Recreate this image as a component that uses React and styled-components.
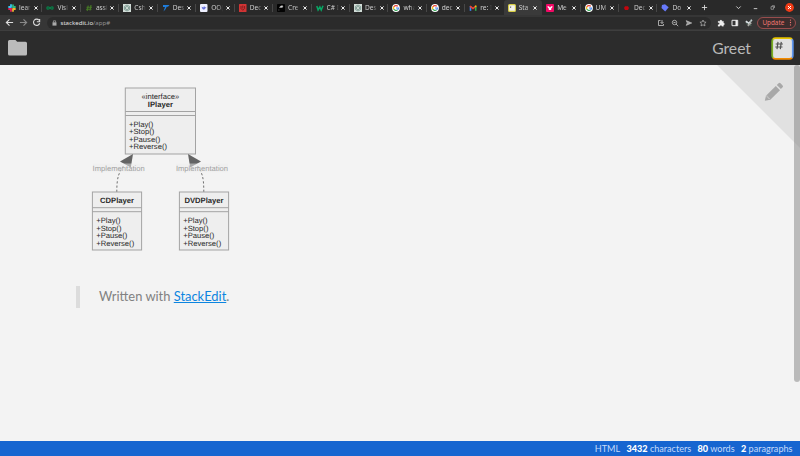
import React from "react";
import styled, { createGlobalStyle } from "styled-components";

const Global = createGlobalStyle`
  * { box-sizing: border-box; }
  html, body { margin: 0; overflow: hidden; }
  svg { display: block; flex: none; }
`;

const Screen = styled.div`
  display: flex;
  flex-direction: column;
  width: 800px;
  height: 456px;
  background: #f3f3f3;
  font-family: Lato, sans-serif;
`;

const TabStrip = styled.div`
  display: flex;
  height: 15px;
  flex: none;
  padding-left: 4px;
  background: #292929;
  color: #cecece;
  font-family: "Noto Sans", sans-serif;
`;

const Tab = styled.div`
  display: flex;
  align-items: center;
  flex: none;
  width: 38.45px;
  height: 15px;
  padding-left: 4px;
  border-radius: 3px 3px 0 0;
  background: ${(p) => (p.$active ? "#3a3a3a" : "transparent")};
`;

const TabTitle = styled.span`
  width: 12px;
  margin-left: 3px;
  overflow: hidden;
  white-space: nowrap;
  font-size: 6.6px;
  line-height: 10px;
  mask-image: linear-gradient(90deg, #000 60%, transparent 100%);
`;

const TabClose = styled.span`
  display: flex;
  margin-left: 2.6px;
`;

const Separator = styled.span`
  width: 1px;
  height: 8px;
  margin-left: auto;
  background: ${(p) => (p.$hidden ? "transparent" : "#474747")};
`;

const WindowControls = styled.div`
  display: grid;
  grid-template-columns: 17px 34px 17px 17px 18px;
  align-items: center;
  justify-items: center;
  flex: none;
  svg:nth-child(2) { justify-self: end; margin-right: 5px; }
`;

const Toolbar = styled.div`
  display: flex;
  align-items: center;
  flex: none;
  height: 16px;
  padding: 0 4px 0 5px;
  background: #363636;
  border-bottom: 1px solid #3e3e3e;
  font-family: "Noto Sans", sans-serif;
`;

const NavButtons = styled.div`
  display: flex;
  gap: 4.7px;
  width: 42px;
`;

const Address = styled.div`
  display: flex;
  align-items: center;
  width: 664px;
  height: 12px;
  padding: 0 4px 0 4.5px;
  border-radius: 6px;
  background: #2b2b2b;
`;

const Url = styled.span`
  margin-left: 4px;
  color: #e2e2e2;
  font-size: 6.1px;
  line-height: 10px;
`;

const UrlPath = styled.span`
  color: #929292;
`;

const AddressIcons = styled.div`
  display: flex;
  gap: 6px;
  margin-left: auto;
`;

const Extensions = styled.div`
  display: flex;
  align-items: center;
  gap: 6px;
  margin-left: 5.5px;
`;

const Update = styled.div`
  display: flex;
  align-items: center;
  justify-content: space-between;
  width: 39px;
  height: 12px;
  margin-left: auto;
  padding: 0 3px 0 4.5px;
  border: 1px solid #984d4d;
  border-radius: 6px;
  background: #3b2d2d;
  color: #ee7772;
  font-size: 6.3px;
  line-height: 9px;
`;

const AppBar = styled.header`
  display: flex;
  align-items: center;
  flex: none;
  height: 34px;
  padding: 0 6px 0 8px;
  background: #2c2c2c;
`;

const FileTitle = styled.span`
  margin-left: auto;
  margin-right: 20px;
  color: #b9b9b9;
  font-size: 15.7px;
  line-height: 22px;
`;

const Preview = styled.main`
  position: relative;
  flex: 1;
  padding: 20px 0 0 76px;
`;

const EditCorner = styled.div`
  position: absolute;
  top: 0;
  right: 0;
`;

const ScrollThumb = styled.div`
  position: absolute;
  top: 0;
  right: 0;
  width: 6px;
  height: 317px;
  border-radius: 3px;
  background: rgba(120, 120, 120, 0.46);
`;

const Quote = styled.blockquote`
  width: 500px;
  height: 22px;
  margin: 31px 0 0;
  padding-left: 19px;
  border-left: 4px solid #dcdcdc;
  color: #818181;
  font-size: 12.9px;
  line-height: 20px;
`;

const Link = styled.a`
  color: #0c85e0;
  text-decoration: underline;
  text-decoration-thickness: 1px;
`;

const StatusBar = styled.footer`
  display: flex;
  align-items: center;
  justify-content: flex-end;
  gap: 6.3px;
  flex: none;
  height: 15px;
  padding-right: 7.5px;
  background: #1665d0;
  color: #c5dafa;
  font-size: 9.1px;
  line-height: 14px;
  b { color: #fff; font-weight: 900; }
`;

const Diagram = styled.svg`
  font-family: "Liberation Sans", sans-serif;
  font-size: 7.65px;
  fill: #292929;
  text-rendering: geometricPrecision;
`;

const Lines = styled.g`
  fill: #eee;
  stroke: #a3a3a3;
  stroke-width: 1;
`;

const ClassName = styled.text`
  font-weight: ${(p) => (p.$plain ? 400 : 700)};
  text-anchor: middle;
`;

const Relation = styled.text`
  fill: #a3a3a3;
  text-anchor: middle;
`;

const icons = {
  slack: (
    <g strokeWidth="1.8" strokeLinecap="round" fill="none">
      <path d="M3 1v2M1 3h2" stroke="#36c5f0" />
      <path d="M5 1.2v2M7 3H5" stroke="#2eb67d" />
      <path d="M5 7V5M7 5H5" stroke="#ecb22e" />
      <path d="M1 5h2v2" stroke="#e01e5a" />
    </g>
  ),
  infinity: <path d="M1 4c0-2 2-1 3 0s3 2 3 0-2-1-3 0-3 2-3 0Z" fill="none" stroke="#087c46" strokeWidth="1.4" />,
  hash: <path d="M3.2 1.5 2.2 7M6 1 5 6.5M1.5 3.2h5.5M1 5.2h5.5" stroke="#467a25" strokeWidth="1.1" />,
  gpt: (
    <>
      <rect width="8" height="8" fill="#d2ddd8" />
      <path d="m4 1 2.6 1.5v3L4 7 1.4 5.5v-3ZM4 2.4l1.5.8v1.7L4 5.7l-1.5-.8V3.2Z" fill="none" stroke="#62847a" strokeWidth=".7" />
    </>
  ),
  f: <path d="M1 1h6.5L6 2.8H4.7L3.5 5.3 1.5 7.5 3 3H1Z" fill="#1e7ddc" />,
  doc: (
    <>
      <rect width="7.5" height="8" rx="1" fill="#eef0ff" />
      <path d="m1.5 2.7 2 .8L4 2l1 1.3h1.5L4 5.8 2.5 5Z" fill="#6670dc" />
    </>
  ),
  red: (
    <>
      <rect width="7.5" height="8" rx=".5" fill="#d23434" />
      <path d="M2 2v2.5l1.8 1.8 1.8-1.8V2M3.8 1.5v3" fill="none" stroke="#6c181a" strokeWidth=".8" />
    </>
  ),
  black: (
    <>
      <rect width="8" height="8" rx=".8" fill="#030303" />
      <path d="M2.5 3.5c.5-1.3 2-2 3.5-1.5L5.3 3.5ZM1.2 6h1.3" fill="#d7d7d7" stroke="#bbb" strokeWidth=".4" />
    </>
  ),
  w: <path d="m.8 2 1.3 4 1.8-3 1.3 3 1.8-4.3" fill="none" stroke="#08a764" strokeWidth="1.5" />,
  google: (
    <>
      <circle cx="4" cy="4" r="3.9" fill="#fff" />
      <g fill="none" strokeWidth="1.2">
        <path d="M5.8 2.3A2.5 2.5 0 0 0 1.8 3" stroke="#ea4335" />
        <path d="M1.8 2.8a2.5 2.5 0 0 0 0 2.3" stroke="#fbbc05" />
        <path d="M1.8 5.1a2.5 2.5 0 0 0 3.8.8" stroke="#34a853" />
        <path d="M4 4h2.4a2.5 2.5 0 0 1-.8 1.9" stroke="#4285f4" />
      </g>
    </>
  ),
  gmail: (
    <g fill="none" strokeWidth="1.6">
      <path d="M1.5 6.8V2.2" stroke="#4285f4" />
      <path d="M1 2.2 4 4.5l3-2.3" stroke="#ea4335" />
      <path d="M6.7 6.8V3" stroke="#34a853" />
      <path d="M6.7 3.2V1.5" stroke="#fbbc05" />
    </g>
  ),
  stack: (
    <>
      <rect x=".6" y=".6" width="6.8" height="6.8" rx="1" fill="#f3f3ef" stroke="#d6cc43" strokeWidth="1.1" />
      <path d="M2 3.5h1M2.7 2v2" stroke="#666" strokeWidth=".6" />
    </>
  ),
  mermaid: (
    <>
      <rect width="8" height="8" rx="1" fill="#f30865" />
      <path d="M1.5 2q2 .1 2.5 1.8Q4.5 2.1 6.5 2q.1 1.5-1.3 2.5v1.6H2.8V4.5Q1.4 3.5 1.5 2Z" fill="#fff" />
    </>
  ),
  redDot: <path d="M2 2.2h3l1 1.8-1 2H2L1 4Z" fill="#c2060e" />,
  diamond: <path d="m1 1 3-.7 3.7 3L4.2 7.5.5 4Z" fill="#6779fa" />,
};

const tabs = [
  ["slack", "lear"], ["infinity", "Visi"], ["hash", "assi"], ["gpt", "Csh"],
  ["f", "Des"], ["doc", "OO("], ["red", "Dec"], ["black", "Cre"],
  ["w", "C# I"], ["gpt", "Des"], ["google", "wha"], ["google", "dec"],
  ["gmail", "re: I"], ["stack", "Sta"], ["mermaid", "Me"], ["google", "UM"],
  ["redDot", "Dec"], ["diamond", "Do"],
];
const activeTab = 13;

const methods = ["+Play()", "+Stop()", "+Pause()", "+Reverse()"];

function Members({ x, y }) {
  return methods.map((m, i) => (
    <text key={m} x={x} y={y + i * 7.6}>{m}</text>
  ));
}

function PlayerClass({ x, name, width }) {
  return (
    <g>
      <Lines>
        <rect x={x} y="107" width={width} height="58" />
        <path d={`M${x} 122.7h${width}M${x} 126.7h${width}`} />
      </Lines>
      <ClassName x={x + width / 2} y="118">{name}</ClassName>
      <Members x={x + 3.8} y={138} />
    </g>
  );
}

function ClassDiagram() {
  return (
    <Diagram width="170" height="170">
      <Lines>
        <rect x="49.3" y="3" width="70.2" height="66" />
        <path d="M49.3 26.5h70.2M49.3 30.5h70.2" />
      </Lines>
      <ClassName $plain x="84.4" y="14">«interface»</ClassName>
      <ClassName x="84.4" y="22">IPlayer</ClassName>
      <Members x={53} y={41.5} />
      <g fill="none" stroke="#707070" strokeDasharray="2.2 2">
        <path d="M40.8 107C40.8 91 43 88 48 80" />
        <path d="M127.8 107C127.8 91 126 88 121 80" />
      </g>
      <path d="m57 69-13 7.5L54.8 82.5Z" fill="#646464" />
      <path d="m112 69 13 7.5L114.2 82.5Z" fill="#646464" />
      <g fill="#eeeeee" opacity=".5">
        <rect x="17" y="78.5" width="51" height="9" />
        <rect x="100" y="78.5" width="52" height="9" />
      </g>
      <Relation x="42.7" y="85.7">Implementation</Relation>
      <Relation x="126" y="85.7">Implementation</Relation>
      <PlayerClass x={16.4} width={49.2} name="CDPlayer" />
      <PlayerClass x={103.4} width={49.2} name="DVDPlayer" />
    </Diagram>
  );
}

const Glyph = ({ size = 8, children, color = "#ddd", width = 1 }) => (
  <svg width={size} height={size} viewBox="0 0 8 8" fill="none" stroke={color} strokeWidth={width}>{children}</svg>
);

export default function App() {
  return (
    <Screen>
      <Global />
      <TabStrip>
        {tabs.map(([icon, title], i) => (
          <Tab key={i} $active={i === activeTab}>
            <svg width="8" height="8" viewBox="0 0 8 8">{icons[icon]}</svg>
            <TabTitle>{title}</TabTitle>
            <TabClose>
              <svg width="4" height="4" viewBox="0 0 4 4" stroke="#ededed"><path d="m.4.4 3.2 3.2m0-3.2L.4 3.6" /></svg>
            </TabClose>
            <Separator $hidden={i === activeTab || i === activeTab - 1 || i === tabs.length - 1} />
          </Tab>
        ))}
        <WindowControls>
          <Glyph size={7}><path d="M4 1v6M1 4h6" /></Glyph>
          <Glyph size={7}><path d="m1.5 2.8 2.5 2.5 2.5-2.5" /></Glyph>
          <Glyph size={7}><path d="M2 5.3h4" /></Glyph>
          <Glyph size={7} color="#aaa" width={0.8}><path d="M2.3 3h2.9v3H2.3ZM3.3 2h3v2.6" /></Glyph>
          <svg width="9" height="9" viewBox="0 0 9 9">
            <circle cx="4.5" cy="4.5" r="4.4" fill="#ef3b16" />
            <path d="m3 3 3 3m0-3L3 6" stroke="#fff" />
          </svg>
        </WindowControls>
      </TabStrip>
      <Toolbar>
        <NavButtons>
          <Glyph size={9}><path d="M7.2 4H1.3M4 1.2 1.2 4 4 6.8" /></Glyph>
          <Glyph size={9} color="#898989"><path d="M.8 4h5.9M4 1.2 6.8 4 4 6.8" /></Glyph>
          <Glyph size={9}><path d="M6.3 2A2.8 2.8 0 1 0 6.8 4.7M6.8.8v2.5H4.3" /></Glyph>
        </NavButtons>
        <Address>
          <svg width="5" height="6" viewBox="0 0 5 6"><rect x=".5" y="2.3" width="4" height="3.3" fill="#aaa" /><path d="M1.4 2.5V.8h2.2v1.7" fill="none" stroke="#aaa" strokeWidth=".7" /></svg>
          <Url>stackedit.io<UrlPath>/app#</UrlPath></Url>
          <AddressIcons>
            <Glyph color="#b5b5b5" width={0.9}><path d="M3.5 1.5h-2v5h5V5M5 1v3.5M3.5 3 5 4.5 6.5 3" /></Glyph>
            <Glyph color="#b5b5b5" width={0.9}><circle cx="3.5" cy="3.5" r="2.2" /><path d="m5 5 2.2 2.2M2.5 3.5h2" /></Glyph>
            <Glyph color="#b5b5b5" width={0.6}><path d="m1.2 1.6 5.6 2.4-5.6 2.4.7-1.9L5 4 1.9 3.5Z" fill="#b5b5b5" /></Glyph>
            <Glyph color="#b5b5b5" width={0.7}><path d="m4 1 .9 2 2.2.2-1.6 1.5.5 2.2L4 5.8 2 6.9l.5-2.2L.9 3.2 3.1 3Z" /></Glyph>
          </AddressIcons>
        </Address>
        <Extensions>
          <Glyph color="#eee" width={0.2}><path d="M1 2.2h1.8a1.1 1.1 0 1 1 2.2 0h1.5V4a1 1 0 1 1 0 2v1.3H4.9a1 1 0 1 0-2 0H1V5.5a1 1 0 1 0 0-1.8Z" fill="#eee" /></Glyph>
          <Glyph color="#eee" width={1}><path d="M1 1.3h5.7v5.4H1ZM5.2 1v6" /><path d="M5.5 1v6" strokeWidth="1.6" /></Glyph>
          <Glyph>
            <path d="M.8 2.2 4 4.5 6.8.8" stroke="#d8dfe2" strokeWidth="1.7" />
            <path d="m2.8 6.8 3.3-3.2" stroke="#a7a8a3" strokeWidth="2" />
            <path d="m1 5 1.6-.5M5.3 2h1M4.7 6.4h1.8" stroke="#485e53" strokeWidth="1.2" />
          </Glyph>
        </Extensions>
        <Update>
          Update
          <svg width="3" height="7" viewBox="0 0 3 7" fill="#ee7772"><circle cx="1.5" cy="1.1" r=".65" /><circle cx="1.5" cy="3.5" r=".65" /><circle cx="1.5" cy="5.9" r=".65" /></svg>
        </Update>
      </Toolbar>
      <AppBar>
        <svg width="19" height="16" viewBox="0 0 19 16"><path d="M1.5 0h6L9.2 1.8h8.3Q19 1.8 19 3.3v10.8q0 1.5-1.5 1.5h-16Q0 15.6 0 14.1V1.5Q0 0 1.5 0Z" fill="#bbb" /></svg>
        <FileTitle>Greet</FileTitle>
        <svg width="23" height="23" viewBox="0 0 23 23">
          <rect x="1" y="1" width="21" height="21" rx="3.5" fill="#e1e1e1" />
          <g fill="none" strokeWidth="1.8">
            <path d="M2 2.2Q3 1.2 4.5 1.2h14q1.5 0 2.5 1" stroke="#e6c400" />
            <path d="M21 2.2q.8 1 .8 2.3v14q0 1.4-.8 2.3" stroke="#5f96ed" />
            <path d="M21 20.8q-1 1-2.5 1h-14q-1.5 0-2.5-1" stroke="#f38b00" />
            <path d="M2 20.8q-.8-1-.8-2.3v-14q0-1.4.8-2.3" stroke="#79ad22" />
          </g>
          <path d="M7 4.8 6 12.2M10.3 4.8l-1 7.4M4.7 7h7.2M4.3 10h7.2" stroke="#545454" strokeWidth="1.2" />
        </svg>
      </AppBar>
      <Preview>
        <ClassDiagram />
        <Quote>Written with <Link>StackEdit</Link>.</Quote>
        <EditCorner>
          <svg width="83" height="83" viewBox="0 0 83 83">
            <path d="M0 0h83v83Z" fill="#e1e1e1" />
            <g fill="#a8a8a8" transform="translate(47.8 17.7)">
              <path d="M0 18 1.2 13 11 3.3l4.2 4.2L5.5 17.1Z" />
              <path d="m12 2.3 1.8-1.7q1-.9 1.9 0l2.1 2.1q.9.9 0 1.8L16.1 6.4Z" />
              <path d="m1.2 13 1.1.1v1.4h1.3v1.3h1.6" fill="none" stroke="#c9c9c9" strokeWidth=".8" />
            </g>
          </svg>
        </EditCorner>
        <ScrollThumb />
      </Preview>
      <StatusBar>
        <span>HTML</span>
        <span><b>3432</b> characters</span>
        <span><b>80</b> words</span>
        <span><b>2</b> paragraphs</span>
      </StatusBar>
    </Screen>
  );
}
